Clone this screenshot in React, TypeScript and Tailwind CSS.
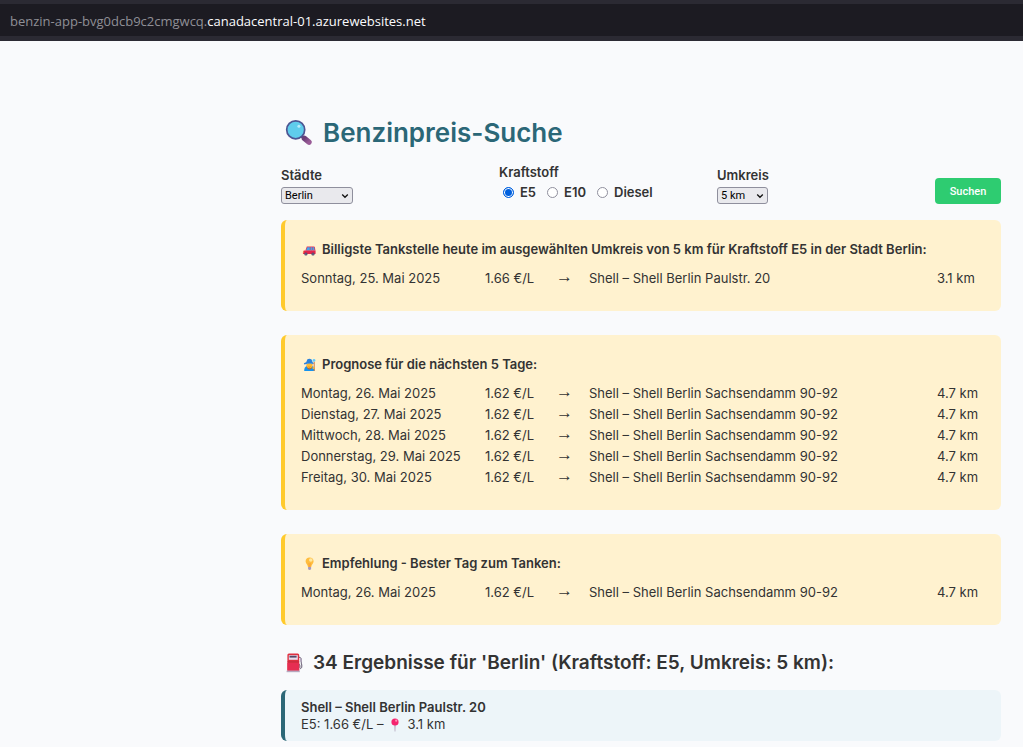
import { useState } from "react";
import type { ReactNode } from "react";

type Offer = { date: string; price: string; station: string; distance: string };

const today: Offer[] = [
  { date: "Sonntag, 25. Mai 2025", price: "1.66 €/L", station: "Shell – Shell Berlin Paulstr. 20", distance: "3.1 km" },
];

const forecast: Offer[] = [
  "Montag, 26. Mai 2025",
  "Dienstag, 27. Mai 2025",
  "Mittwoch, 28. Mai 2025",
  "Donnerstag, 29. Mai 2025",
  "Freitag, 30. Mai 2025",
].map((date) => ({
  date,
  price: "1.62 €/L",
  station: "Shell – Shell Berlin Sachsendamm 90-92",
  distance: "4.7 km",
}));

function MagnifierIcon() {
  return (
    <svg viewBox="0 0 32 32" className="size-8 shrink-0" aria-hidden="true">
      <defs>
        <linearGradient id="handle" x1="0" y1="0" x2="1" y2="1">
          <stop offset="0" stopColor="#6b3f78" />
          <stop offset="1" stopColor="#9a5b97" />
        </linearGradient>
      </defs>
      <path d="M20 18.5 L23 21.5" stroke="#4b3c63" strokeWidth="2.6" />
      <path d="M23.4 21.4 L28 25.2" stroke="url(#handle)" strokeWidth="5.4" strokeLinecap="round" />
      <circle cx="14.7" cy="12.8" r="9" fill="#5fcdec" stroke="#4d5593" strokeWidth="1.7" />
      <circle cx="17.9" cy="9.2" r="1.5" fill="#b9edfb" />
    </svg>
  );
}

function CarIcon() {
  return (
    <svg viewBox="0 0 16 16" className="size-4 shrink-0" aria-hidden="true">
      <path d="M5.8 4.4 H13 Q13.8 4.4 13.9 5.2 L14.4 8.6 H4.4 Z" fill="#e2355a" />
      <path d="M6.4 5.3 H8.8 V8.5 H5 Z M9.5 5.3 H11.4 V8.5 H9.5 Z M12 5.3 H13.1 L13.5 8.5 H12 Z" fill="#3fa6ee" />
      <path d="M2 9.6 Q2.1 8.5 3.6 8.4 H14.6 V11.4 Q14.6 12.1 13.8 12.1 H2.6 Q1.8 12.1 1.9 11.1 Z" fill="#e3264d" />
      <circle cx="4.9" cy="12" r="1.6" fill="#4b4468" />
      <circle cx="12" cy="12" r="1.6" fill="#4b4468" />
      <circle cx="4.9" cy="12" r=".6" fill="#aaa2bb" />
      <circle cx="12" cy="12" r=".6" fill="#aaa2bb" />
      <path d="M2 9.6h1v1h-1z" fill="#ffc34f" />
    </svg>
  );
}

function MageIcon() {
  return (
    <svg viewBox="0 0 16 16" className="size-4 shrink-0" aria-hidden="true">
      <path d="M3.2 14 Q3 10 5.8 9.2 H11.4 Q13.9 10 13.6 14 Z" fill="#1593ee" />
      <path d="M5.6 7.2 Q5.4 12.5 8.5 12.6 Q11.5 12.5 11.4 7 Z" fill="#b06a3c" />
      <ellipse cx="8.5" cy="8.6" rx="2.7" ry="2.7" fill="#ffbe2e" />
      <path d="M7.4 9.7 Q8.5 10.7 9.6 9.7" fill="none" stroke="#c25b28" strokeWidth=".6" />
      <path d="M5.2 5.2 L6.4 2.2 Q8.8 1.2 10.6 2.6 L11.6 5.2 Q13.2 6 12.6 7 Q8.5 5.7 3.4 7.4 Q1.8 6.2 5.2 5.2 Z" fill="#2b82dc" />
      <path d="M13.2 4.8 V14" stroke="#d77942" strokeWidth="1" />
      <circle cx="13" cy="3.4" r="1.4" fill="#65cbfb" />
      <circle cx="12.4" cy="11" r="1" fill="#ffbe2e" />
    </svg>
  );
}

function BulbIcon() {
  return (
    <svg viewBox="0 0 16 16" className="size-4 shrink-0" aria-hidden="true">
      <path d="M8.6 1.4 C6.2 1.4 4.6 3.1 4.6 5.2 C4.6 7.5 6.6 8.4 7 11 H10.2 C10.6 8.4 12.6 7.5 12.6 5.2 C12.6 3.1 11 1.4 8.6 1.4Z" fill="#ffbd3e" />
      <ellipse cx="9.8" cy="4" rx="1.8" ry="1.7" fill="#ffe7a0" />
      <path d="M7.9 7 L8.2 11 M9.3 7 L9 11" stroke="#f58c32" strokeWidth=".5" />
      <path d="M7.1 11 H10.1 V13.2 Q8.6 14.8 7.1 13.2 Z" fill="#a99abd" />
    </svg>
  );
}

function PumpIcon() {
  return (
    <svg viewBox="0 0 24 24" className="size-6 shrink-0" aria-hidden="true">
      <path d="M18 6 Q21 6.8 20.3 9.5 Q20 12.5 20.8 14 Q21.3 17.2 19.6 17.6 Q18.6 17.2 18.9 15 Q18.9 13.5 18 13" fill="none" stroke="#51465f" strokeWidth=".9" />
      <path d="M19 7 L20.7 7.8 V11.4 L19 10.6 Z" fill="#b5a9bf" />
      <path d="M6.4 4 Q6.4 2.5 7.9 2.5 H16.7 Q18.2 2.5 18.2 4 V19.7 H6.4 Z" fill="#df3040" />
      <path d="M6.4 12 H18.2 V19.7 H6.4 Z" fill="#e62e52" />
      <path d="M7.8 4.2 H16.8 V8.8 H7.8 Z" fill="#e9dcec" />
      <path d="M8.5 4.8 H15.6 V6.6 H8.5 Z" fill="#514868" />
      <path d="M6.4 10.4 H18.2 V11.3 H6.4 Z" fill="#c22a45" />
      <path d="M5.6 19.6 H18.8 V21.2 H5.6 Z" fill="#b6a8bf" />
    </svg>
  );
}

function PinIcon() {
  return (
    <svg viewBox="0 0 16 16" className="size-4 shrink-0" aria-hidden="true">
      <path d="M7.4 8 H8.6 L8.3 14.5 H7.7 Z" fill="#a897b1" />
      <circle cx="8" cy="5" r="3.6" fill="#f5246f" />
      <circle cx="9.2" cy="3.7" r="1.1" fill="#ff92b5" />
    </svg>
  );
}

function OfferTable({ rows, label }: { rows: Offer[]; label: string }) {
  return (
    <table className="mt-2 w-full table-fixed border-collapse" aria-label={label}>
      <colgroup>
        <col className="w-[184px]" />
        <col className="w-[71px]" />
        <col className="w-[33px]" />
        <col />
        <col className="w-12" />
      </colgroup>
      <tbody>
        {rows.map((r) => (
          <tr key={r.date}>
            <td className="p-0">{r.date}</td>
            <td className="p-0">{r.price}</td>
            <td className="p-0 pb-1 font-['Liberation_Sans',sans-serif] text-[17px] leading-4">→</td>
            <td className="p-0">{r.station}</td>
            <td className="p-0">{r.distance}</td>
          </tr>
        ))}
      </tbody>
    </table>
  );
}

function Panel({ icon, title, rows }: { icon: ReactNode; title: string; rows: Offer[] }) {
  return (
    <section className="mb-6 rounded-md border-l-4 border-[#ffca2c] bg-[#fff2cf] px-4 pt-[19px] pb-[22px] leading-[21px]">
      <h3 className="flex items-center gap-[5px] font-semibold">
        {icon}
        {title}
      </h3>
      <OfferTable rows={rows} label={title} />
    </section>
  );
}

function Select({ id, options, className }: { id: string; options: string[]; className: string }) {
  return (
    <span className="relative flex">
      <select
        id={id}
        className={`h-[17px] appearance-none rounded-[3px] border border-[#8f8f9d] bg-[#e9e9ed] pl-[3px] font-['Roboto',sans-serif] text-[11px] leading-[15px] font-normal text-black ${className}`}
      >
        {options.map((o) => (
          <option key={o}>{o}</option>
        ))}
      </select>
      <svg viewBox="0 0 8 8" className="pointer-events-none absolute top-[5px] right-1 size-2" aria-hidden="true">
        <path d="M1.2 2.5 L4 5.3 L6.8 2.5" fill="none" stroke="#111" strokeWidth="1.3" />
      </svg>
    </span>
  );
}

export default function App() {
  const [fuel, setFuel] = useState("E5");
  return (
    <div className="min-h-screen bg-[#f9fafc] font-['Inter',sans-serif] text-[13px] text-[#333333]">
      <header className="border-t-4 border-b-[5px] border-[#2b2a33] bg-[#1c1b22] px-[10px] pt-[2px] font-['Open_Sans','Noto_Sans',sans-serif] leading-[30px] text-[#8f8f96]">
        benzin-app-bvg0dcb9c2cmgwcq.<span className="text-[#fbfbfe]">canadacentral-01.azurewebsites.net</span>
      </header>
      <main className="pt-[71px] pr-[22px] pb-[6px] pl-[281px]">
        <h1 className="flex items-center gap-[10px] text-[26px] leading-[42px] font-semibold text-[#2b6777]">
          <MagnifierIcon />
          Benzinpreis-Suche
        </h1>
        <form className="mt-2 mb-4 flex items-end gap-4 font-semibold" onSubmit={(e) => e.preventDefault()}>
          <div className="flex flex-1 flex-col items-start gap-[3px]">
            <label htmlFor="city" className="leading-[18px]">Städte</label>
            <Select id="city" options={["Berlin", "Hamburg", "München"]} className="w-[72px]" />
          </div>
          <fieldset className="flex-1">
            <legend className="leading-5">Kraftstoff</legend>
            <div className="flex gap-[11px] pb-[2px] pl-1 leading-5">
              {["E5", "E10", "Diesel"].map((f) => (
                <label key={f} className="flex items-center gap-[6px]">
                  <input
                    type="radio"
                    name="fuel"
                    value={f}
                    checked={fuel === f}
                    onChange={() => setFuel(f)}
                    className="size-[11px] appearance-none rounded-full border border-[#8f8f9d] bg-white checked:border-[#0060df] checked:bg-[#0060df] checked:shadow-[inset_0_0_0_1px_white]"
                  />
                  {f}
                </label>
              ))}
            </div>
          </fieldset>
          <div className="flex flex-1 flex-col items-start gap-[3px]">
            <label htmlFor="radius" className="leading-[18px]">Umkreis</label>
            <Select id="radius" options={["5 km", "10 km", "25 km"]} className="w-[51px]" />
          </div>
          <button type="submit" className="h-[26px] w-[66px] rounded bg-[#2ecc71] pt-[2px] font-['Roboto',sans-serif] text-[11px] font-medium text-white">
            Suchen
          </button>
        </form>
        <Panel
          icon={<CarIcon />}
          title="Billigste Tankstelle heute im ausgewählten Umkreis von 5 km für Kraftstoff E5 in der Stadt Berlin:"
          rows={today}
        />
        <Panel icon={<MageIcon />} title="Prognose für die nächsten 5 Tage:" rows={forecast} />
        <Panel icon={<BulbIcon />} title="Empfehlung - Bester Tag zum Tanken:" rows={forecast.slice(0, 1)} />
        <h2 className="mb-[13px] flex items-center gap-2 text-[19px] leading-7 font-semibold">
          <PumpIcon />
          34 Ergebnisse für 'Berlin' (Kraftstoff: E5, Umkreis: 5 km):
        </h2>
        <article className="rounded-md border-l-4 border-[#2b6777] bg-[#edf5f9] px-4 pt-[9px] pb-2 leading-[17px]">
          <h3 className="font-semibold">Shell – Shell Berlin Paulstr. 20</h3>
          <p className="flex items-center gap-1">
            E5: 1.66 €/L –
            <PinIcon />
            3.1 km
          </p>
        </article>
      </main>
    </div>
  );
}
